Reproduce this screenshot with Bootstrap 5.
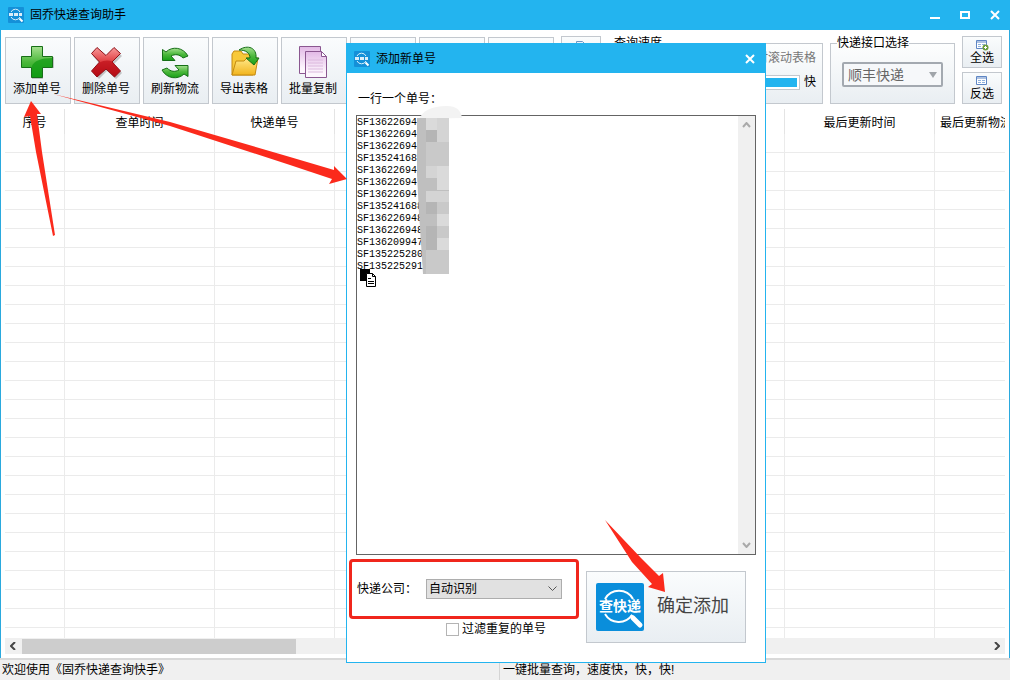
<!DOCTYPE html>
<html lang="zh-CN">
<head>
<meta charset="utf-8">
<meta name="viewport" content="width=device-width, initial-scale=1">
<title>固乔快递查询助手</title>
<link href="https://cdn.jsdelivr.net/npm/bootstrap@5.3.0/dist/css/bootstrap.min.css" rel="stylesheet">
<style>
  body, button, select, textarea { font-family: "Liberation Sans", "Noto Sans CJK SC", sans-serif; }
  body { font-size: 12px; line-height: 16px; color: #000; background: #fff; --sky: #23b4ef; }
  .app-title { height: 30px; background: #23b4ef; padding: 0 10px 0 8px; }
  .app-title > span { margin-left: 6px; }
  .app-body { border: solid #2aa9de; border-width: 0 1px; min-height: 0; }
  .win-btn { border: 0; background: none; padding: 0; width: 10px; height: 30px; color: #fff; display: flex; align-items: center; }
  .win-btn-mid { margin: 0 20px; }
  .tool-row { padding: 6px 7px 0 4px; height: 74px; }
  .tool-set { gap: 3px; }
  .mini-set { margin-left: 7px; }
  .tool-btn, .mini-btn, .confirm-btn { border: 1px solid #c3c8ce; border-radius: 0; background: linear-gradient(#fafcfd, #e9eef2); padding: 0; color: #000; font-size: 12px; line-height: 16px; }
  .tool-btn { width: 66px; height: 67px; flex: none; padding-right: 2px; }
  .tool-btn svg { display: block; margin: 0 auto 2px; }
  .mini-btn { width: 40px; height: 32px; display: block; line-height: 14px; }
  .mini-btn svg { display: block; margin: 0 auto; }
  .box-set { gap: 7px; }
  .group-box { border: 1px solid #c3c8ce; margin: 0; height: 68px; min-width: 0; background: linear-gradient(#fdfefe, #e9eef2); }
  .group-box legend { float: none; width: auto; font-size: 12px; line-height: 14px; margin: 0; padding: 0; }
  .speed-box { width: 216px; padding: 0 6px; }
  .api-box { width: 125px; padding: 0 11px; }
  .api-box legend { margin-left: -5px; }
  .muted-text { color: #777; }
  .speed-track { height: 15px; border: 1px solid #c3c8ce; background: #fff; padding: 2px; border-radius: 0; }
  .speed-track .progress-bar { background: #23b4ef; }
  .api-select { width: 101px; height: 25px; margin-top: 12px; border: 2px solid #a3a9b0; border-radius: 2px; color: #666; font-size: 14px; padding: 0 4px; appearance: none; line-height: 18px;
    background: #f6f8fa url("data:image/svg+xml,%3Csvg xmlns='http://www.w3.org/2000/svg' width='8' height='6'%3E%3Cpath d='M0 0h8L4 6z' fill='%23a0a5aa'/%3E%3C/svg%3E") no-repeat right 4px center; }
  .grid-area { margin: 5px 4px 0; min-height: 0; overflow: hidden; }
  .way-table { table-layout: fixed; width: 1100px; border-collapse: separate; border-spacing: 0; }
  .way-table th { height: 25px; padding: 2px 0 0; font-weight: 400; text-align: center; border-right: 1px solid #e4e4e4; white-space: nowrap; }
  .way-table th.head-start { text-align: left; padding-left: 5px; }
  .way-table td { height: 19px; padding: 0; border: solid #ebebeb; border-width: 0 1px 1px 0; }
  .col-no { width: 60px; } .col-code { width: 120px; } .col-mid { width: 150px; }
  .h-scroll { height: 16px; margin: 0 4px 4px; background: #f0f0f0; padding: 0 5px; }
  .h-thumb { width: 274px; height: 15px; background: #cdcdcd; margin-left: 6px; }
  .status-row { height: 22px; background: #f0f0f0; border-top: 2px solid #d9d9d9; line-height: 21px; }
  .status-row > div { flex: 1 1 0; padding-left: 3px; }
  .status-row > div:first-child { border-right: 1px solid #d4d4d4; flex: 0 0 500px; padding-left: 2px; }
  .add-dialog { position: absolute; left: 346px; top: 43px; width: 420px; background: #fff; border: 1px solid #23b4ef; }
  .add-title { height: 29px; background: #23b4ef; padding: 0 10px 0 7px; }
  .add-title > span { margin-left: 6px; }
  .add-form { padding: 18px 9px 19px; }
  .add-form > label { padding-left: 2px; }
  .list-box { border: 1px solid #646464; height: 440px; }
  .list-box textarea { font: 10px/12px "Liberation Mono", monospace; color: #000; border: 0; padding: 1px 0 0; resize: none; overflow: hidden; outline: 0; }
  .v-scroll { width: 17px; background: #f0f0f0; padding: 6px 4px; }
  .red-frame { border: 3px solid #f0261c; border-radius: 4px; height: 60px; width: 230px; margin-left: -7px; padding-left: 5px; }
  .firm-select { width: 136px; height: 20px; margin-left: 9px; border: 1px solid #adadad; border-radius: 0; font-size: 12px; line-height: 16px; color: #000; padding: 0 2px; appearance: none;
    background: #e1e1e1 url("data:image/svg+xml,%3Csvg xmlns='http://www.w3.org/2000/svg' width='9' height='6'%3E%3Cpath d='M.5 .5l4 4 4-4' fill='none' stroke='%23555'/%3E%3C/svg%3E") no-repeat right 4px center; }
  .dup-row { margin-left: 90px; padding-top: 2px; }
  .dup-check { appearance: none; width: 13px; height: 13px; margin: 0 3px 0 0; border: 1px solid #b4b4b4; background: #fff; }
  .confirm-btn { width: 160px; height: 72px; margin: 16px 10px 0 auto; padding: 0 0 0 9px; color: #444; font-size: 18px; line-height: 24px; }
  .confirm-btn span { margin-left: 13px; padding-bottom: 3px; }
  .mosaic { position: absolute; left: 66px; top: 61px; }
  .copy-mark { position: absolute; left: 13px; top: 225px; }
  .guide-arrows { position: absolute; left: 0; top: 0; pointer-events: none; }
</style>
</head>
<body class="vh-100 overflow-hidden d-flex flex-column position-relative">

<svg class="position-absolute" width="0" height="0" aria-hidden="true">
  <defs>
    <linearGradient id="gGreen" x1="0" y1="0" x2="0" y2="1"><stop offset="0" stop-color="#a5e08f"/><stop offset=".5" stop-color="#4cb83c"/><stop offset="1" stop-color="#16a016"/></linearGradient>
    <linearGradient id="gRed" x1="0" y1="0" x2="0" y2="1"><stop offset="0" stop-color="#f79a9a"/><stop offset=".5" stop-color="#e03a3e"/><stop offset="1" stop-color="#b00d16"/></linearGradient>
    <linearGradient id="gGold" x1="0" y1="0" x2="0" y2="1"><stop offset="0" stop-color="#ffe98a"/><stop offset="1" stop-color="#f2b41c"/></linearGradient>
    <linearGradient id="gPink" x1="0" y1="0" x2="0" y2="1"><stop offset="0" stop-color="#e2b9e6"/><stop offset=".8" stop-color="#fdf6fd"/></linearGradient>
  </defs>
  <symbol id="brand" viewBox="0 0 48 48">
    <rect width="48" height="48" rx="2" fill="#0a8edb"/>
    <path d="M9 16a16 16 0 0 1 28 0M9 31a16 16 0 0 0 27 1" fill="none" stroke="#fff" stroke-width="2"/>
    <path d="M35 32l3 3" stroke="#fff" stroke-width="2"/>
    <path d="M37 35l7 7" stroke="#fff" stroke-width="5" stroke-linecap="round"/>
    <text x="24" y="28" text-anchor="middle" font-size="14" font-weight="700" fill="#fff" font-family="Noto Sans CJK SC, sans-serif">查快递</text>
  </symbol>
  <symbol id="brandSmall" viewBox="0 0 16 16">
    <rect width="16" height="16" rx="1" fill="#1490d8"/>
    <path d="M3 5a5 5 0 0 1 9 0M3 10a5 5 0 0 0 9 0" fill="none" stroke="#d8effb"/>
    <path d="M11.500 11.500l3 3" stroke="#fff" stroke-width="2"/>
    <path d="M1 7.500h4M6 7.500h4M11 7.500h3" stroke="#fff" stroke-width="3" opacity=".85"/>
  </symbol>
  <symbol id="cross" viewBox="0 0 10 10"><path d="M1 1l8 8M9 1L1 9" stroke="currentColor" stroke-width="2"/></symbol>
</svg>

<header class="app-title d-flex align-items-center flex-shrink-0">
  <svg width="16" height="16"><use href="#brandSmall"/></svg>
  <span>固乔快递查询助手</span>
  <button class="win-btn ms-auto" aria-label="最小化"><svg width="10" height="10"><path d="M0 8h10" stroke="#fff" stroke-width="2"/></svg></button>
  <button class="win-btn win-btn-mid" aria-label="最大化"><svg width="10" height="10"><path d="M1 2h8v6H1z" fill="none" stroke="#fff" stroke-width="2"/></svg></button>
  <button class="win-btn" aria-label="关闭"><svg width="10" height="10"><use href="#cross"/></svg></button>
</header>

<main class="app-body d-flex flex-column flex-grow-1">
  <div class="tool-row d-flex align-items-end flex-shrink-0">
    <div class="d-flex tool-set">
      <button class="tool-btn">
        <svg width="34" height="34" viewBox="0 0 34 34"><path d="M12 2h11v10h11v11H23v11H12V23H2V12h10z" fill="#888" opacity=".45"/><path d="M11.500 1.500h11v10h10v11h-10v10h-11v-10h-10v-11h10z" fill="url(#gGreen)" stroke="#176f17"/><path d="M12 21c2-5 9-8 20-8v9H22v10H12z" fill="#0f9a12" opacity=".7"/></svg>添加单号</button>
      <button class="tool-btn">
        <svg width="34" height="34" viewBox="0 0 34 34"><path d="M9 4l9 8 8-8 7 7-8 8 8 9-6 6-9-8-8 8-6-7 7-8-7-8z" fill="#888" opacity=".45"/><path d="M8 2.500l9 8 8-8 6.500 6-8.500 8.500 8.500 9-6 6-8.500-8-9 8-5.500-6 8-9-8-8.500z" fill="url(#gRed)" stroke="#8d1118"/><path d="M10.500 17.500c4-2 8-3 13-1l7.500 9.500-5.500 5.500-8.500-8-9 8-5-5.500z" fill="#b80a14" opacity=".6"/></svg>删除单号</button>
      <button class="tool-btn">
        <svg width="34" height="34" viewBox="0 0 34 34"><g fill="url(#gGreen)" stroke="#176f17"><path d="M4.500 4.500L8 7C14 1 25 2 30 11l-5 2c-4-4-8-4-12-2l4 4.500H4.500z"/><path d="M30 31.500L26 29C20 35 9 34 4 25l5-2c4 4 8 4 12 2l-4-4.500h13z"/></g></svg>刷新物流</button>
      <button class="tool-btn">
        <svg width="34" height="34" viewBox="0 0 34 34"><path d="M5 30V9l2-3h7l2 3h10v21z" fill="#f8c93a" stroke="#c48a10"/><path d="M5 30l4-14h8l3-3h11l-3 17z" fill="url(#gGold)" stroke="#c48a10"/><path d="M12 5c9-6 18-2 17 8h3l-5 7-8-7h4c0-5-4-8-11-8z" fill="url(#gGreen)" stroke="#176f17"/></svg>导出表格</button>
      <button class="tool-btn">
        <svg width="34" height="34" viewBox="0 0 34 34"><path d="M3.500 1.500h21v27h-21z" fill="url(#gPink)" stroke="#8a5790"/><path d="M9.500 6.500h16l5 5v21h-21z" fill="url(#gPink)" stroke="#8a5790"/><path d="M25.500 6.500v5h5z" fill="#fff" stroke="#8a5790"/><path d="M12 15h15M12 18h15M12 21h15M12 24h15M12 27h15" stroke="#dcb9de"/></svg>批量复制</button>
      <button class="tool-btn" aria-label="工具"></button>
      <button class="tool-btn" aria-label="工具"></button>
      <button class="tool-btn" aria-label="工具"></button>
    </div>
    <div class="d-flex flex-column gap-1 flex-shrink-0 mini-set">
      <button class="mini-btn" aria-label="查询"><svg width="14" height="24" viewBox="0 0 14 24"><path d="M2.500 1.500h6l3 3v18h-9z" fill="#e8f1fb" stroke="#6f96c4"/></svg></button>
      <button class="mini-btn" aria-label="停止"></button>
    </div>
    <div class="d-flex flex-shrink-0 ms-auto box-set">
      <fieldset class="group-box speed-box">
        <legend>查询速度</legend>
        <div class="muted-text text-end">实时滚动表格</div>
        <div class="d-flex align-items-center mt-2">
          <div class="progress speed-track flex-grow-1 me-1"><div class="progress-bar w-100"></div></div>
          <span>快</span>
        </div>
      </fieldset>
      <fieldset class="group-box api-box">
        <legend>快递接口选择</legend>
        <select class="api-select d-block" aria-label="快递接口"><option>顺丰快递</option></select>
      </fieldset>
    </div>
    <div class="d-flex flex-column gap-1 flex-shrink-0 mini-set">
      <button class="mini-btn"><svg width="14" height="12" viewBox="0 0 14 12"><path d="M1.500 1.500h10v8h-10z" fill="#fff" stroke="#5f86c4"/><path d="M1 3h11" stroke="#5f86c4"/><path d="M3 5.500h3M3 7.500h3M7 5.500h3" stroke="#8fb0dd"/><circle cx="10.500" cy="8.500" r="3" fill="#6a9c3a"/><path d="M9 8.500h3M10.500 7v3" stroke="#fff"/></svg>全选</button>
      <button class="mini-btn"><svg width="14" height="12" viewBox="0 0 14 12"><path d="M1.500 1.500h10v8h-10z" fill="#fff" stroke="#5f86c4"/><path d="M1 3h11" stroke="#5f86c4"/><path d="M3 5.500h3M3 7.500h3M7 5.500h3M7 7.500h3" stroke="#8fb0dd"/></svg>反选</button>
    </div>
  </div>

  <div class="grid-area flex-grow-1">
    <table class="way-table">
      <colgroup><col class="col-no"><col class="col-mid"><col class="col-code"><col class="col-mid"><col class="col-mid"><col class="col-mid"><col class="col-mid"><col></colgroup>
      <thead><tr><th>序号</th><th>查单时间</th><th>快递单号</th><th></th><th></th><th></th><th>最后更新时间</th><th class="head-start">最后更新物流</th></tr></thead>
      <tbody id="rows"></tbody>
    </table>
  </div>
  <div class="h-scroll d-flex align-items-center flex-shrink-0">
    <svg width="6" height="8"><path d="M5 0L1 4l4 4" fill="none" stroke="#444" stroke-width="2"/></svg>
    <div class="h-thumb"></div>
    <svg class="ms-auto" width="6" height="8"><path d="M1 0l4 4-4 4" fill="none" stroke="#444" stroke-width="2"/></svg>
  </div>
</main>

<footer class="status-row d-flex flex-shrink-0">
  <div>欢迎使用《固乔快递查询快手》</div>
  <div>一键批量查询，速度快，快，快!</div>
</footer>

<section class="add-dialog" role="dialog" aria-labelledby="addTitle">
  <div class="add-title d-flex align-items-center">
    <svg width="16" height="16"><use href="#brandSmall"/></svg>
    <span id="addTitle">添加新单号</span>
    <button class="win-btn ms-auto" aria-label="关闭"><svg width="10" height="10"><use href="#cross"/></svg></button>
  </div>
  <form class="add-form">
    <label class="d-block mb-2" for="codes">一行一个单号：</label>
    <div class="list-box d-flex">
      <textarea id="codes" class="flex-grow-1" spellcheck="false">
SF13622694
SF13622694
SF13622694
SF13524168
SF13622694
SF13622694
SF13622694
SF135241688
SF136226948
SF136226948
SF136209947
SF135225280
SF135225291
</textarea>
      <div class="v-scroll d-flex flex-column justify-content-between">
        <svg width="9" height="6"><path d="M1 5l3.500-4L8 5" fill="none" stroke="#aaa" stroke-width="2"/></svg>
        <svg width="9" height="6"><path d="M1 1l3.500 4L8 1" fill="none" stroke="#aaa" stroke-width="2"/></svg>
      </div>
    </div>
    <div class="d-flex">
      <div class="pt-1">
        <div class="red-frame d-flex align-items-center">
          <label for="firm">快递公司：</label>
          <select class="firm-select" id="firm"><option>自动识别</option></select>
        </div>
        <div class="d-flex align-items-center dup-row">
          <input type="checkbox" class="dup-check" id="dup"><label for="dup">过滤重复的单号</label>
        </div>
      </div>
      <button type="button" class="confirm-btn d-flex align-items-center">
        <svg width="48" height="48"><use href="#brand"/></svg><span>确定添加</span>
      </button>
    </div>
  </form>
  <svg class="mosaic" width="54" height="170" viewBox="0 0 54 170">
    <path d="M6 14C10 6 18 1 34 1c9 0 14 4 15 12z" fill="#f3f3f3"/>
    <path d="M4 13h32v156H10L6 108 4 70z" fill="#bfbfbf"/>
    <path d="M24 13h12v24H24zM13 61h23v12H13zM13 86h23v12H13z" fill="#d4d4d4"/>
    <path d="M13 13h11v12H13zM24 61h12v24H24zM24 109h12v12H24zM24 133h12v12H24z" fill="#dadada"/>
    <path d="M13 37h23v24H13zM24 97h12v12H24zM24 121h12v12H24zM13 145h23v24H13z" fill="#c9c9c9"/>
    <path d="M13 25h11v12H13zM13 97h11v12H13zM13 121h11v24H13z" fill="#b5b5b5"/>
  </svg>
  <svg class="copy-mark" width="17" height="19" viewBox="0 0 17 19">
    <path d="M0 0h10v12H0z" fill="#000"/>
    <path d="M6.500 4.500h6l3 3v10h-9z" fill="#fff" stroke="#000"/><path d="M12.500 4.500v3h3M8 9.500h3M8 12.500h6M8 14.500h6" fill="none" stroke="#000"/>
  </svg>
</section>

<svg class="guide-arrows" width="770" height="600" viewBox="0 0 770 600" fill="#fb2a1c">
  <path d="M31 101l10 13-4 0 5 38 13 83-2 1-17-84-6-36-6 1z"/>
  <path d="M53 94l117 28 120 35 44 13v-4l13 13-18 5 3-5-42-14-120-39z"/>
  <path d="M605 520l36 38 18 18 4-3 2 19-17-5 4-3-20-22z"/>
</svg>

<script>
  document.getElementById('rows').innerHTML = ('<tr>' + '<td></td>'.repeat(8) + '</tr>').repeat(60);
</script>
<script src="https://cdn.jsdelivr.net/npm/bootstrap@5.3.0/dist/js/bootstrap.bundle.min.js"></script>
</body>
</html>
